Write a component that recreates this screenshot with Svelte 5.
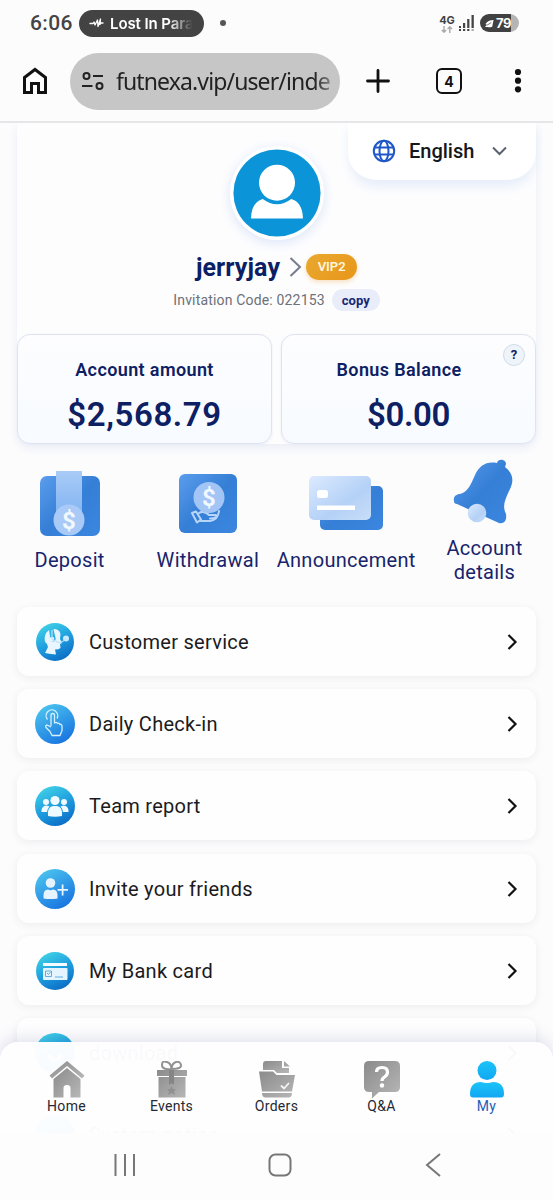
<script lang="ts">
  type MenuIcon = "service" | "checkin" | "team" | "invite" | "card" | "download" | "system";

  const menu: { icon: MenuIcon; label: string }[] = [
    { icon: "service", label: "Customer service" },
    { icon: "checkin", label: "Daily Check-in" },
    { icon: "team", label: "Team report" },
    { icon: "invite", label: "Invite your friends" },
    { icon: "card", label: "My Bank card" },
    { icon: "download", label: "download" },
    { icon: "system", label: "System notice" },
  ];

  const actions = ["Deposit", "Withdrawal", "Announcement", "Account details"];
  const tabs = ["Home", "Events", "Orders", "Q&A", "My"];

  let active = $state("My");
</script>

<div class="phone">
  <header class="status">
    <span class="time">6:06</span>
    <span class="music">
      <svg width="15" height="12" viewBox="0 0 15 12" fill="none" stroke="#fff" stroke-width="1.3" stroke-linecap="round" stroke-linejoin="round">
        <path d="M1 6.5h3l1-1.500 1 3L8.500 3l.5 6.500L11.500 2 11 7.500l1-1.500h2" />
      </svg>
      <span class="song">Lost In Para</span>
    </span>
    <span class="dot"></span>
    <span class="right">
      <span class="net">
        <b>4G</b>
        <svg width="12" height="7" viewBox="0 0 12 7" fill="none" stroke="#aaa" stroke-width="1.4">
          <path d="M3 0v6M.8 4 3 6.200 5.200 4M8.800 7V1M6.600 3 8.800.8 11 3" />
        </svg>
      </span>
      <svg class="signal" width="17" height="18" viewBox="0 0 17 18" fill="#444">
        <path d="M1 12h2v2H1zM5 9h2.200v5H5zM9.200 5h2.200v9H9.200zM13.500 1h2.300v13h-2.300z" />
        <path d="M1 15h2v2H1zM5 15h2.200v2H5zM9.200 15h2.200v2H9.200z" />
        <path fill="#aaa" d="M13.500 15h2.300v2h-2.300z" />
      </svg>
      <span class="battery">
        <svg width="9" height="9" viewBox="0 0 10 10" fill="#fff">
          <path d="M9.500 1 8 8.500C6 9.500 3 9 0 9l2-2.500-1.500-1C3 2 6 1 9.500 1Z" />
          <path d="M2 7 7 4" stroke="#444" stroke-width=".8" />
        </svg>
        79
      </span>
    </span>
  </header>

  <div class="browser">
    <svg class="home" width="26" height="28" viewBox="0 0 26 28" fill="none" stroke="#111" stroke-width="3">
      <path d="M2.500 10.500 13 2.500l10.500 8v15h-7v-9h-7v9h-7z" />
    </svg>
    <div class="address">
      <svg width="22" height="20" viewBox="0 0 22 20" fill="none" stroke="#222" stroke-width="2">
        <circle cx="4.500" cy="5" r="3" />
        <path d="M11 5h10M0 15h10.500" />
        <circle cx="17.500" cy="15" r="3" />
      </svg>
      <span class="url">futnexa.vip/user/inde</span>
    </div>
    <svg class="plus" width="24" height="24" viewBox="0 0 24 24" stroke="#111" stroke-width="2.800" stroke-linecap="round">
      <path d="M12 1.500v21M1.500 12h21" />
    </svg>
    <span class="count">4</span>
    <svg class="more" width="8" height="26" viewBox="0 0 8 26" fill="#111">
      <circle cx="4" cy="4" r="3.100" /><circle cx="4" cy="12.700" r="3.100" /><circle cx="4" cy="21.300" r="3.100" />
    </svg>
  </div>

  <main>
    <section class="profile">
      <div class="language">
        <svg width="24" height="24" viewBox="0 0 24 24" fill="none" stroke="#1f57c9" stroke-width="2">
          <circle cx="12" cy="12" r="10.200" />
          <ellipse cx="12" cy="12" rx="4.500" ry="10.200" />
          <path d="M2.500 8.500h19M2.500 15.500h19" />
        </svg>
        <span>English</span>
        <svg width="15" height="10" viewBox="0 0 15 10" fill="none" stroke="#5a6270" stroke-width="2">
          <path d="m1 1.500 6.500 6.500L14 1.500" />
        </svg>
      </div>

      <svg class="avatar" width="94" height="94" viewBox="0 0 96 96">
        <circle cx="48" cy="48" r="48" fill="#fff" />
        <circle cx="48" cy="48" r="44.500" fill="#0b95d8" />
        <circle cx="48" cy="37.500" r="18.400" fill="#fff" />
        <path fill="#fff" d="M33.500 54q14.500 11 29 0C70 56 74.500 63 74.500 74h-53C21.500 63 26 56 33.500 54Z" />
      </svg>

      <div class="user">
        <span class="name">jerryjay</span>
        <svg width="13" height="20" viewBox="0 0 13 20" fill="none" stroke="#777d8c" stroke-width="2">
          <path d="m1.500 1 9.500 9-9.500 9" />
        </svg>
        <span class="vip">VIP2</span>
      </div>
      <div class="invitation">
        <span>Invitation Code: 022153</span>
        <button type="button">copy</button>
      </div>

      <div class="balances">
        <div class="balance">
          <h2>Account amount</h2>
          <p>$2,568.79</p>
        </div>
        <div class="balance bonus">
          <h2>Bonus Balance</h2>
          <p>$0.00</p>
          <span class="help">?</span>
        </div>
      </div>
    </section>

    <section class="actions">
      {#each actions as action, i}
        <div class="action">
          {#if i === 0}
            <svg width="62" height="68" viewBox="0 0 62 68">
              <rect x="1" y="6" width="60" height="60" rx="7" fill="url(#blue)" />
              <path d="M17 1h26v54H17z" fill="url(#glass)" />
              <circle cx="30" cy="50" r="15.500" fill="#a9caf7" />
              <text x="30" y="58.500" class="dollar">$</text>
            </svg>
          {:else if i === 1}
            <svg width="60" height="68" viewBox="0 0 60 68">
              <rect x="1" y="4" width="58" height="59" rx="6" fill="url(#blue)" />
              <path d="m14 43 4-1.500 5 8-4 3zM21 43q5-3 10 2h7q2 3-6 3.500M23 51h9q8-1 9-10" fill="none" stroke="#b9d6fa" stroke-width="2" stroke-linejoin="round" stroke-linecap="round" />
              <circle cx="31" cy="27.500" r="15.500" fill="#a3c5f5" />
              <text x="31" y="36" class="dollar">$</text>
            </svg>
          {:else if i === 2}
            <svg width="76" height="68" viewBox="0 0 76 68">
              <rect x="12" y="16" width="63" height="44" rx="5" fill="url(#blue)" />
              <rect x="1" y="6" width="62" height="44" rx="5" fill="url(#pale)" />
              <rect x="9" y="20" width="11" height="8" rx="2.500" fill="#fff" />
              <path d="M9 35.500h38V40H9z" fill="#fff" />
            </svg>
          {:else}
            <svg width="64" height="68" viewBox="0 1 64 68">
              <path d="M2 44c-1-4 2-7 6-7 8-2 11-10 15-19C27 9 34 4 45 6c1-5 9-4 9 1l-1 3c9 7 9 15 4 24-4 9-7 15-3 23 1 7-2 10-7 9L5 47q-3 0-3-3Z" fill="url(#blue)" />
              <circle cx="25" cy="56" r="9.300" fill="url(#pale)" />
            </svg>
          {/if}
          <span>{action}</span>
        </div>
      {/each}
    </section>

    <nav class="menu">
      {#each menu as item}
        <a href="#{item.icon}">
          <svg class="badge" width="40" height="40" viewBox="0 0 40 40">
            <circle cx="20" cy="20" r={item.icon === "service" || item.icon === "card" ? 19 : 20} fill={item.icon === "checkin" || item.icon === "invite" ? "url(#sky)" : "url(#teal)"} />
            {#if item.icon === "service"}
              <path fill="#e9f6ff" d="M14 8q-3.500 2.500-4 6-1.500 5 2 8l1 3-3 6q6 1 11 1.500l-1-5q4 0 5.500-1.500l-.5-4 2-1-2-4 .5-5q-1-5-7-5l1.500 7q2 5-2 5.500-4-.5-3-5.500z" />
              <circle cx="31" cy="16.500" r="3" fill="#cceaff" />
              <circle cx="17" cy="17" r="2.300" fill="#e9f6ff" />
              <path d="M17 8v9l6 3.500q5 0 8-4" stroke="#b7e1fb" stroke-width="1.200" fill="none" />
            {:else if item.icon === "checkin"}
              <path d="M16 22V11.500q0-2 1.700-2 1.800 0 1.800 2V19q2-1.500 3 .5 2-1 2.500 1 2-.5 2 2v4l-2 5H17l-2-4-4-4q-1-2 1-2.500l4 2M12.500 15.500a5.800 5.800 0 1 1 9.500-1" fill="none" stroke="#d7f0ff" stroke-width="1.300" stroke-linejoin="round" />
            {:else if item.icon === "team"}
              <g fill="#eefaff">
                <circle cx="11" cy="16" r="3" /><circle cx="29" cy="16" r="3" />
                <path d="M6.500 26q-.5-6 5-6.500l3 1q-2 2-2.500 5.500zm27 0q.5-6-5-6.500l-3 1q2 2 2.500 5.500z" />
                <circle cx="20" cy="14.500" r="4.600" />
                <path d="M13 30q-1-9 5-10h4q6 1 5 10-7 1.500-14 0Z" />
              </g>
            {:else if item.icon === "invite"}
              <g fill="#e6f4ff">
                <circle cx="15.500" cy="14" r="4.800" />
                <path d="M8.500 29.500v-3q0-6 4.500-6 2.500 1.500 5 0 4.500 0 4.500 6v3q-7 1-14 0ZM26.700 15.500h1.800V20H33v1.800h-4.500v4.700h-1.800v-4.700H22.500V20h4.200z" />
              </g>
            {:else if item.icon === "card"}
              <path d="M8 12h24v3H8z" fill="#f4fcff" />
              <rect x="8" y="17" width="24.500" height="12" rx="1" fill="#e4f5ff" />
              <path d="M10.500 20h6v5.500h-6zM12 22l1.500 1.500 2-2.500M20 26h8" stroke="#60aee0" fill="none" />
            {:else}
              <path d="M14 21a6 6 0 0 0 12 0" fill="none" stroke="#fff" stroke-width="3" />
            {/if}
          </svg>
          <span>{item.label}</span>
          <svg class="chevron" width="11" height="18" viewBox="0 0 11 18" fill="none" stroke="#111" stroke-width="2.200">
            <path d="m1.500 2 7 7-7 7" />
          </svg>
        </a>
      {/each}
    </nav>
  </main>

  <footer>
    <nav class="tabs">
      {#each tabs as tab}
        <button type="button" class:active={active === tab} onclick={() => (active = tab)}>
          <svg width="36" height="38" viewBox="0 0 36 38" fill="url(#grey)">
            {#if tab === "Home"}
              <path d="M18 0 35.500 14.500l-2.500 3L18 5 3 17.500l-2.500-3z" />
              <path d="M18 7 31.500 18v18.500h-10V27q0-3-3.500-3t-3.500 3v9.500h-10V18z" />
            {:else if tab === "Events"}
              <path d="M3 9h30v6H3zM4.500 16h27v20.500h-27z" />
              <path d="M15 9h5v15l-2.500-2-2.500 2z" fill="#858585" />
              <path d="M17.500 8Q8 9 8 4t5-3q4 1 4.500 7Q18 2 22 1t5 3-9.500 4" fill="none" stroke="#929292" stroke-width="2" />
              <path d="m17.500 25 1.500 3h3l-2 2.500 1 3.500-3.500-2-3.500 2 1-3.500-2-2.500h3z" fill="#919191" />
            {:else if tab === "Orders"}
              <path d="M4 9V3q0-3 3-3h16v7h7v5H18l-3-3zM25 0l6 5.500h-6z" />
              <path d="M0 10.500h14l3.500 3.500H36l-3 16.500H3zM3 32h30q0 4-3 4.500H6Q3 36 3 32Z" />
              <path d="m22 24.500 3 3 5-5.500" fill="none" stroke="#f5f5f5" stroke-width="1.800" />
            {:else if tab === "Q&A"}
              <path d="M5 0h26q5 0 5 5v21q0 5-5 5H15l-7 6.500V31H5q-5 0-5-5V5q0-5 5-5Z" />
              <path d="M12.500 11q0-4.500 5.500-4.500t5.500 4.500q0 3-3 5-2.500 1.500-2.500 4" fill="none" stroke="#fff" stroke-width="3.200" />
              <circle cx="18" cy="24.500" r="2.200" fill="#fff" />
            {:else}
              <g fill="url(#cyan)">
                <circle cx="18" cy="9.500" r="9.500" />
                <path d="M1 33q0-12 11-12 6 2 12 0 11 0 11 12 0 3.500-3 3.500H4q-3 0-3-3.500Z" />
              </g>
            {/if}
          </svg>
          <span>{tab}</span>
        </button>
      {/each}
    </nav>
    <div class="system">
      <svg width="24" height="24" viewBox="0 0 24 24" stroke="#777" stroke-width="2"><path d="M2.500 1v22M12 1v22M21 1v22" /></svg>
      <svg width="24" height="24" viewBox="0 0 24 24" fill="none" stroke="#777" stroke-width="2"><rect x="1.500" y="1.500" width="21" height="21" rx="6" /></svg>
      <svg width="24" height="24" viewBox="0 0 24 24" fill="none" stroke="#777" stroke-width="2"><path d="M18 1 5 12l13 11" /></svg>
    </div>
  </footer>

  <svg class="defs" width="0" height="0" aria-hidden="true">
    <defs>
      <linearGradient id="blue" x1="0" y1="0" x2="1" y2="1"><stop stop-color="#5b9ded" /><stop offset=".5" stop-color="#357fd6" /><stop offset="1" stop-color="#3b86df" /></linearGradient>
      <linearGradient id="glass" x1="0" y1="0" x2="0" y2="1"><stop stop-color="#a9cbf6" /><stop offset="1" stop-color="#78aff2" /></linearGradient>
      <linearGradient id="pale" x1="0" y1="0" x2="1" y2="1"><stop stop-color="#dceaff" /><stop offset=".6" stop-color="#b4d1f6" /><stop offset="1" stop-color="#c9def9" /></linearGradient>
      <linearGradient id="sky" x1=".2" y1="0" x2=".8" y2="1"><stop stop-color="#4cc5ee" /><stop offset="1" stop-color="#1670e0" /></linearGradient>
      <linearGradient id="teal" x1=".2" y1="0" x2=".7" y2="1"><stop stop-color="#42d4e6" /><stop offset=".5" stop-color="#20a0df" /><stop offset="1" stop-color="#0b6bc5" /></linearGradient>
      <linearGradient id="grey" x1="0" y1="0" x2="1" y2="1"><stop stop-color="#8b8b8b" /><stop offset="1" stop-color="#b7b7b7" /></linearGradient>
      <linearGradient id="cyan" x1="0" y1="0" x2="0" y2="1"><stop stop-color="#1bc3f7" /><stop offset="1" stop-color="#12a7f3" /></linearGradient>
    </defs>
  </svg>
</div>

<style>
  :global(body) {
    margin: 0;
    background: #fcfcfd;
  }

  .phone {
    position: relative;
    width: 553px;
    height: 1200px;
    overflow: hidden;
    display: flex;
    flex-direction: column;
    box-sizing: border-box;
    background: #fcfcfd;
    font-family: Roboto, sans-serif;
    color: #15171c;
  }

  svg {
    display: block;
    flex: none;
  }

  .defs {
    position: absolute;
  }

  .status {
    display: flex;
    align-items: center;
    height: 46px;
    flex: none;
    padding: 0 34px 0 30px;
    box-sizing: border-box;
    color: #444;
  }

  .time {
    width: 49px;
    font: 500 21px Roboto, sans-serif;
    letter-spacing: 0.4px;
  }

  .music {
    display: flex;
    align-items: center;
    gap: 6px;
    width: 125px;
    height: 27px;
    padding: 0 8px 0 10px;
    box-sizing: border-box;
    border-radius: 14px;
    background: #434343;
    color: #fff;
  }

  .song {
    flex: 1;
    overflow: hidden;
    white-space: nowrap;
    font: 600 15px Inter, sans-serif;
    mask-image: linear-gradient(90deg, #000 68%, transparent 96%);
    letter-spacing: -0.1px;
  }

  .dot {
    width: 6px;
    height: 6px;
    margin-left: 16px;
    border-radius: 50%;
    background: #555;
  }

  .right {
    display: flex;
    align-items: center;
    margin-left: auto;
  }

  .net {
    display: flex;
    flex-direction: column;
    align-items: center;
    width: 16px;
    font: 11px/12px Inter, sans-serif;
  }

  .signal {
    margin: 0 5px 0 3px;
  }

  .battery {
    display: flex;
    align-items: center;
    gap: 2px;
    width: 39px;
    height: 18px;
    padding-left: 5px;
    box-sizing: border-box;
    border-radius: 9px;
    background: linear-gradient(90deg, #414141 79%, #b5b5b5 79%);
    color: #fff;
    font: 700 13px Inter, sans-serif;
    letter-spacing: -0.4px;
  }

  .browser {
    display: flex;
    align-items: center;
    height: 77px;
    flex: none;
    padding: 0 31px 5px 22px;
    box-sizing: border-box;
    border-bottom: 2px solid #e6e6e8;
  }

  .address {
    display: flex;
    align-items: center;
    gap: 12px;
    width: 270px;
    height: 57px;
    margin-left: 22px;
    padding: 0 9px 0 12px;
    box-sizing: border-box;
    border-radius: 29px;
    background: #c6c6c7;
  }

  .url {
    flex: 1;
    overflow: hidden;
    white-space: nowrap;
    color: #222;
    font: 23px/32px "Noto Sans", sans-serif;
    letter-spacing: -0.88px;
    mask-image: linear-gradient(90deg, #000 92%, rgba(0, 0, 0, 0.4));
  }

  .plus {
    margin-left: 26px;
  }

  .count {
    display: grid;
    place-items: center;
    width: 26px;
    height: 26px;
    margin-left: 46px;
    box-sizing: border-box;
    border: 2.5px solid #111;
    border-radius: 6px;
    color: #111;
    font: 700 14px Inter, sans-serif;
  }

  .more {
    margin-left: auto;
  }

  main {
    flex: none;
    padding: 0 17px;
  }

  .profile {
    position: relative;
    display: flex;
    flex-direction: column;
    align-items: center;
    height: 321px;
    padding-top: 23px;
    box-sizing: border-box;
    border-radius: 0 0 14px 14px;
    box-shadow: 0 4px 10px #eaedf6;
    clip-path: inset(0 -12px -14px);
    background: #fdfdfe;
  }

  .language {
    position: absolute;
    top: -3px;
    right: 0;
    display: flex;
    align-items: center;
    width: 188px;
    height: 60px;
    padding: 2px 29px 0 24px;
    box-sizing: border-box;
    border-radius: 0 0 28px 28px;
    background: #fff;
    box-shadow: 0 8px 12px -2px #e4ecf8;
    font-size: 20px;
    font-weight: 500;
  }

  .language span {
    flex: 1;
    margin-left: 13px;
  }

  .avatar {
    border-radius: 50%;
    box-shadow: 0 3px 12px #dbe5f7;
  }

  .user {
    display: flex;
    align-items: center;
    height: 32px;
    margin-top: 11px;
  }

  .name {
    margin-right: 9px;
    color: #0c1f66;
    font-size: 25px;
    font-weight: 700;
    letter-spacing: 0.1px;
  }

  .vip {
    width: 51px;
    margin-left: 4px;
    border-radius: 13px;
    background: linear-gradient(135deg, #e8a92e, #e8961b);
    box-shadow: 0 2px 5px #f7dfbd;
    color: #fff6df;
    font-size: 13px;
    font-weight: 600;
    line-height: 26px;
    text-align: center;
  }

  .invitation {
    display: flex;
    align-items: center;
    gap: 7px;
    height: 24px;
    margin-top: 5px;
    color: #6d7078;
    font-size: 14px;
    letter-spacing: 0.17px;
  }

  .invitation button {
    width: 48px;
    height: 22px;
    padding: 0;
    border: 0;
    border-radius: 11px;
    background: #e9edfa;
    color: #172772;
    font: 700 13px Roboto, sans-serif;
  }

  .balances {
    display: flex;
    gap: 9px;
    width: 100%;
    margin-top: 22px;
  }

  .balance {
    position: relative;
    flex: 1;
    height: 110px;
    padding-top: 24px;
    box-sizing: border-box;
    border: 1px solid #dfe3f0;
    border-radius: 13px;
    background: linear-gradient(#fdfdff, #f7fbff);
    box-shadow: 0 1px 3px #e9edf7;
    color: #0d2063;
    text-align: center;
  }

  .balance h2 {
    margin: 0;
    font-size: 18px;
    font-weight: 600;
    line-height: 22px;
    letter-spacing: 0.38px;
  }

  .balance p {
    margin: 14px 0 0;
    font-size: 33px;
    font-weight: 600;
    line-height: 40px;
    letter-spacing: 0.6px;
  }

  .bonus h2 {
    padding-right: 19px;
  }

  .bonus p {
    letter-spacing: -0.4px;
  }

  .help {
    position: absolute;
    top: 9px;
    right: 10px;
    width: 20px;
    border: 1px solid #cfdcea;
    border-radius: 50%;
    background: #eff4fa;
    font-size: 13px;
    font-weight: 700;
    line-height: 20px;
  }

  .actions {
    display: grid;
    grid-template-columns: repeat(4, 138.3px);
    justify-content: center;
    align-items: center;
    height: 163px;
    padding: 0 0 9px 1px;
    box-sizing: border-box;
  }

  .action {
    display: flex;
    flex-direction: column;
    align-items: center;
    color: #17246b;
    font-size: 20px;
    line-height: 24px;
    text-align: center;
  }

  .action span {
    max-width: 140px;
    margin-top: 10px;
    letter-spacing: 0.3px;
  }

  .action:last-child span {
    width: 90px;
  }

  .dollar {
    fill: #f2f8ff;
    font: 700 24px Roboto, sans-serif;
    text-anchor: middle;
  }

  .menu {
    display: flex;
    flex-direction: column;
    gap: 13.2px;
  }

  .menu a {
    display: flex;
    align-items: center;
    height: 69px;
    padding: 1px 18px 0;
    box-sizing: border-box;
    border-radius: 12px;
    background: #fefefe;
    box-shadow: 0 2px 9px #ededef;
    color: #1b1b1d;
    font-size: 20px;
    letter-spacing: 0.28px;
    text-decoration: none;
  }

  .menu span {
    flex: 1;
    margin-left: 14px;
  }

  footer {
    position: absolute;
    inset: auto 0 0;
  }

  .tabs {
    display: grid;
    grid-template-columns: repeat(5, 105px);
    justify-content: center;
    height: 91px;
    border-radius: 18px 18px 0 0;
    background: rgba(254, 254, 255, 0.98);
    box-shadow: 0 -3px 16px rgba(60, 70, 140, 0.16);
  }

  .tabs button {
    display: flex;
    flex-direction: column;
    align-items: center;
    padding: 19px 0 0;
    border: 0;
    background: none;
    color: #252932;
    font: 14px/14px Roboto, sans-serif;
    letter-spacing: 0.3px;
  }

  .tabs .active {
    color: #1c61b5;
  }

  .system {
    display: flex;
    justify-content: space-between;
    height: 67px;
    padding: 20px 107px 0 113px;
    box-sizing: border-box;
    background: #fdfdfd;
  }
</style>
